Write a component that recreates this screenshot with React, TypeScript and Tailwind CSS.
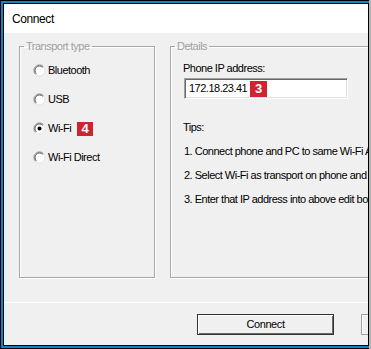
import React from "react";

const transports = [
  { id: "bt", label: "Bluetooth", checked: false },
  { id: "usb", label: "USB", checked: false },
  { id: "wifi", label: "Wi-Fi", checked: true, badge: "4" },
  { id: "wifid", label: "Wi-Fi Direct", checked: false },
];

const tips = [
  "1. Connect phone and PC to same Wi-Fi AP.",
  "2. Select Wi-Fi as transport on phone and note its IP address.",
  "3. Enter that IP address into above edit box.",
];

const Radio = ({ checked }: { checked: boolean }) => (
  <svg width="13" height="13" viewBox="0 0 13 13" className="shrink-0">
    <circle cx="6.5" cy="6.5" r="5.5" fill="#fff" stroke="#e3e3e3" />
    <path d="M2.6 10.4 A5.5 5.5 0 0 1 10.4 2.6" fill="none" stroke="#8a8a8a" />
    <path d="M3.3 9.7 A4.5 4.5 0 0 1 9.7 3.3" fill="none" stroke="#5a5a5a" />
    {checked && <circle cx="6.5" cy="6.5" r="2" fill="#000" />}
  </svg>
);

const Badge = ({ n, className }: { n: string; className: string }) => (
  <span
    className={`flex items-center justify-center bg-[#d0232f] text-white font-bold text-[13px] leading-none tracking-normal ${className}`}
  >
    {n}
  </span>
);

export default function App() {
  return (
    <div className="w-[371px] h-[349px] bg-[#b5b5b5] flex font-['Liberation_Sans',Arial,sans-serif] text-black">
      <div className="w-[369px] h-full border-l border-t border-b border-black bg-[#1683c4] pl-[2px] pt-[2px] pb-[2px]">
        <div className="h-full border border-black bg-[#f0f0f0] flex flex-col overflow-hidden">
          {/* title bar */}
          <div className="h-[29px] shrink-0 bg-white flex items-center pl-[8px] text-[12px] tracking-[-0.4px]">
            Connect
          </div>

          {/* groups */}
          <div className="flex gap-[15px] pl-[15px] pt-[7px] shrink-0 text-[11px] tracking-[-0.5px]">
            <fieldset className="w-[136px] h-[238px] shrink-0 border border-[#a8a8a8] shadow-[inset_1px_1px_0_#fff,1px_1px_0_#fff] px-0 pb-0 m-0">
              <legend className="ml-[4px] px-[2px] leading-[13px] text-[#a0a0a0]">
                Transport type
              </legend>
              <div className="flex flex-col pl-[13px] pt-[3px]">
                {transports.map((t) => (
                  <div key={t.id} className="h-[29px] flex items-center">
                    <Radio checked={t.checked} />
                    <span className="ml-[2px]">{t.label}</span>
                    {t.badge && (
                      <Badge n={t.badge} className="ml-[6px] w-[16px] h-[14px]" />
                    )}
                  </div>
                ))}
              </div>
            </fieldset>

            <fieldset className="w-[260px] h-[238px] shrink-0 border border-[#a8a8a8] shadow-[inset_1px_1px_0_#fff,1px_1px_0_#fff] px-0 pb-0 m-0">
              <legend className="ml-[4px] px-[2px] leading-[13px] text-[#a0a0a0]">
                Details
              </legend>
              <div className="flex flex-col pl-[12px] leading-[13px]">
                <div className="mt-[9px]">Phone IP address:</div>
                <div className="mt-[3px] ml-[1px] w-[164px] h-[21px] bg-white border-t border-l border-[#a0a0a0] border-b border-r border-b-white border-r-white shadow-[inset_1px_1px_0_#696969,inset_-1px_-1px_0_#e3e3e3] flex items-center pl-[4px]">
                  <span>172.18.23.41</span>
                  <Badge n="3" className="ml-[3px] w-[17px] h-[16px]" />
                </div>
                <div className="mt-[22px]">Tips:</div>
                {tips.map((t) => (
                  <div key={t} className="mt-[11px] whitespace-nowrap ml-[1px]">
                    {t}
                  </div>
                ))}
              </div>
            </fieldset>
          </div>

          {/* bottom bar */}
          <div className="mt-[24px] flex-1 border-t border-white flex items-start gap-[27px] pl-[193px] pt-[11px] text-[11px] tracking-[-0.4px]">
            <button className="w-[137px] h-[21px] shrink-0 bg-[#f0f0f0] border border-[#333] shadow-[inset_1px_1px_0_#fff,inset_-1px_-1px_0_#696969]">
              Connect
            </button>
            <button className="w-[80px] h-[21px] shrink-0 bg-[#f0f0f0] border border-[#a0a0a0] shadow-[inset_1px_1px_0_#fff]">
              Cancel
            </button>
          </div>
        </div>
      </div>
    </div>
  );
}
